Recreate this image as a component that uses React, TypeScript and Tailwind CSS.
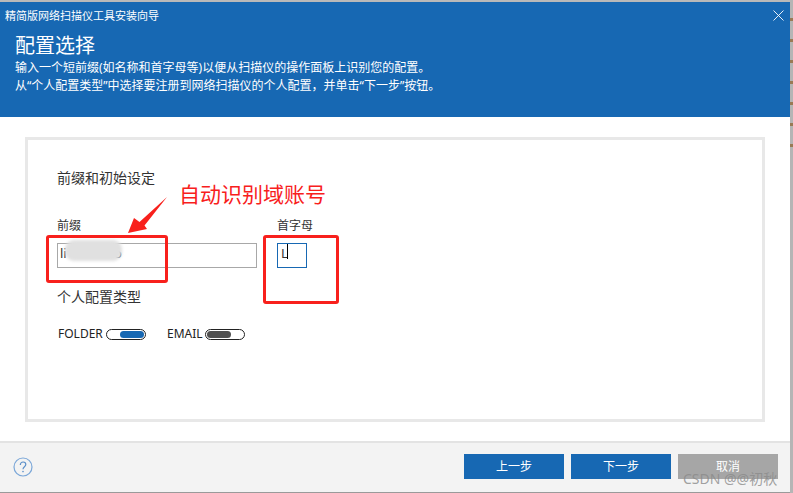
import React from "react";

function Toggle({ on }: { on: boolean }) {
  return (
    <span className="flex h-[11px] w-[40px] items-center rounded-full border border-[#222] bg-white px-[1px]">
      {on ? (
        <span className="ml-auto h-[7px] w-[24px] rounded-full bg-[#1768b3]" />
      ) : (
        <span className="h-[7px] w-[24px] rounded-full bg-[#505050]" />
      )}
    </span>
  );
}

export default function App() {
  return (
    <div
      className="relative flex h-[493px] w-[793px] overflow-hidden bg-white text-[#333]"
      style={{ fontFamily: '"Noto Sans", "Noto Sans CJK SC", sans-serif' }}
    >
      <div className="flex w-[790px] flex-col">
        <div className="h-[2px] bg-[#b9b9b9]" />
        <header className="relative h-[115px] bg-[#1768b3] text-white">
          <div className="pl-[5px] pt-[6px] text-[11px] leading-[15px]">精简版网络扫描仪工具安装向导</div>
          <h1 className="pl-[15px] pt-[10px] text-[20px] leading-[26px] font-normal">配置选择</h1>
          <p className="pl-[15px] text-[12px] leading-[18px]">
            输入一个短前缀(如名称和首字母等)以便从扫描仪的操作面板上识别您的配置。
            <br />
            从“个人配置类型”中选择要注册到网络扫描仪的个人配置，并单击“下一步”按钮。
          </p>
          <svg className="absolute right-[6px] top-[8px] h-[11px] w-[11px]" viewBox="0 0 11 11" fill="none" stroke="#fff" strokeWidth="0.9">
            <path d="M0.5 0.5 10.5 10.5M10.5 0.5 0.5 10.5" />
          </svg>
        </header>

        <main className="flex-1 px-[25px] pt-[20px]">
          <section className="h-[285px] border-[3px] border-[#e8e8e8] pl-[29px] pt-[28px]">
            <div className="text-[14px] leading-[20px]">前缀和初始设定</div>
            <div className="mt-[30px] flex gap-[20px]">
              <div>
                <label className="block text-[12px] leading-[16px]">前缀</label>
                <div className="mt-[9px] h-[25px] w-[200px] border border-[#a8a8a8] pl-[2px] text-[13px] leading-[18px]">li&nbsp;&nbsp;&nbsp;&nbsp;&nbsp;&nbsp;&nbsp;&nbsp;&nbsp;&nbsp;&nbsp;&nbsp;&nbsp;&nbsp;o</div>
              </div>
              <div>
                <label className="block text-[12px] leading-[16px]">首字母</label>
                <div className="mt-[9px] flex h-[25px] w-[30px] items-start border border-[#1768b3] pl-[3px] text-[13px] leading-[18px]">
                  L<span className="-ml-[1px] h-[15px] w-[1px] bg-black" />
                </div>
              </div>
            </div>
            <div className="mt-[19px] text-[14px] leading-[20px]">个人配置类型</div>
            <div className="mt-[19px] flex items-center pl-[1px] text-[12px] leading-[16px] text-[#222]">
              <span className="w-[48px]">FOLDER</span>
              <Toggle on />
              <span className="ml-[21px] w-[38px]">EMAIL</span>
              <Toggle on={false} />
            </div>
          </section>
        </main>

        <footer className="flex h-[51px] items-center justify-between border-t-2 border-[#e3e3e3] bg-[#f3f3f3] pb-[2px] pl-[13px] pr-[12px]">
          <svg className="h-[20px] w-[20px]" viewBox="0 0 20 20" fill="none">
            <circle cx="10" cy="10" r="9" stroke="#7ba7d8" strokeWidth="1.2" />
            <path d="M7.3 8c0-1.7 1.2-3 2.8-3s2.7 1.1 2.7 2.6c0 2.1-2.8 2.3-2.8 4.6" stroke="#5b8fc9" strokeWidth="1.2" />
            <circle cx="10" cy="14.6" r="0.8" fill="#5b8fc9" />
          </svg>
          <div className="flex gap-[7px] text-[12px] text-white">
            <button className="h-[25px] w-[100px] bg-[#1768b3]">上一步</button>
            <button className="h-[25px] w-[100px] bg-[#1768b3]">下一步</button>
            <button className="h-[25px] w-[100px] bg-[#a6a6a6]">取消</button>
          </div>
        </footer>
        <div className="h-[1px] bg-[#9a9a9a]" />
      </div>
      <div className="flex w-[3px] flex-col bg-[#b5b5b5]">
        <div className="h-[160px] bg-[repeating-linear-gradient(180deg,#b5b5b5_0,#b5b5b5_18px,#9a7a55_18px,#9a7a55_21px)]" />
      </div>

      {/* annotations over the screenshot */}
      <div className="absolute left-[65px] top-[240px] h-[21px] w-[57px] rounded-[9px] bg-[#e0e0e0] blur-[1.5px]" />
      <div className="absolute left-[46px] top-[235px] h-[48px] w-[122px] rounded-[3px] border-[3px] border-[#f8201c]" />
      <div className="absolute left-[263px] top-[235px] h-[69px] w-[76px] rounded-[3px] border-[3px] border-[#f8201c]" />
      <div className="absolute left-[179px] top-[180px] text-[21px] leading-[28px] text-[#f8201c]">自动识别域账号</div>
      <svg className="absolute left-[125px] top-[192px] h-[45px] w-[46px]" viewBox="0 0 46 45">
        <path d="M42 5 19.5 33.5 22 37 3 41 9 26 14.5 30Z" fill="#f8201c" />
      </svg>
      <div className="absolute left-[683px] top-[470px] text-[14px] leading-[18px] text-[#8a8a8a]/80">CSDN @@初秋</div>
    </div>
  );
}
